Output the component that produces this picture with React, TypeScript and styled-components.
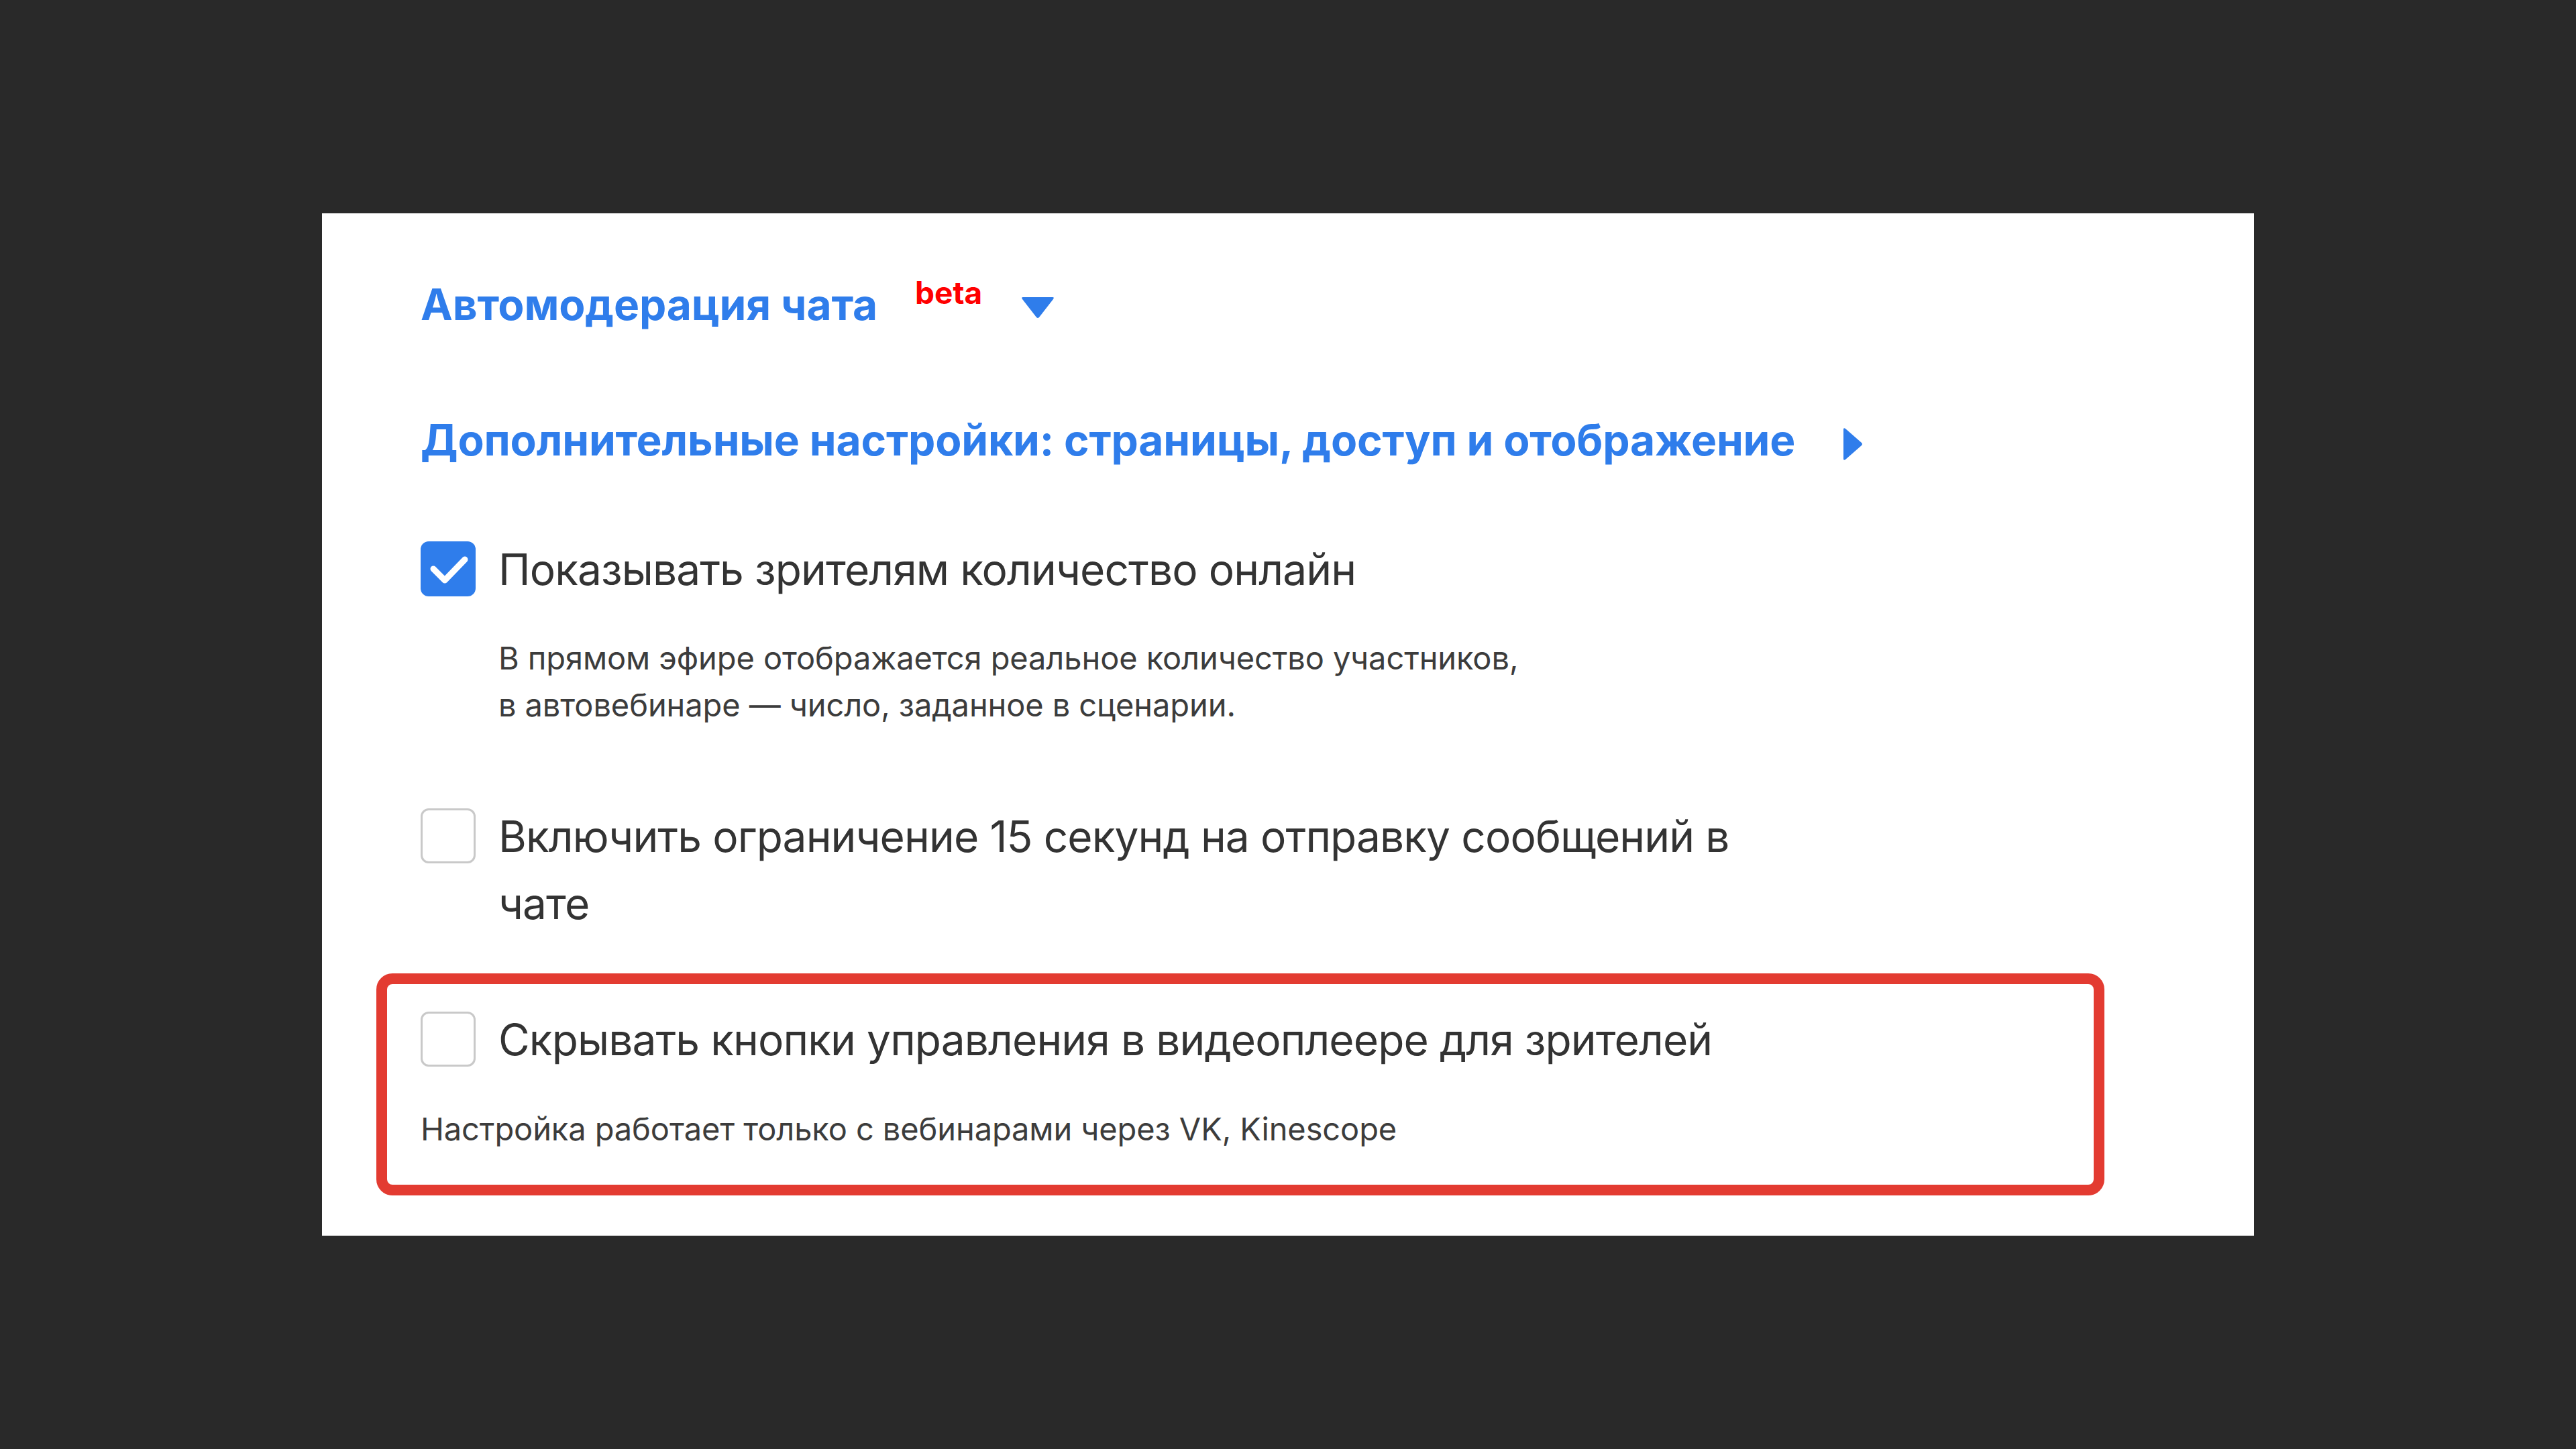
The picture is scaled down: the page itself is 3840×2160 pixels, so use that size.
import React from "react";
import styled, { createGlobalStyle } from "styled-components";

const Global = createGlobalStyle`
  html, body {
    margin: 0;
    padding: 0;
    background: #292929;
  }
  body {
    font-family: Inter, "Noto Sans", "Liberation Sans", sans-serif;
  }
`;

const Page = styled.div`
  box-sizing: border-box;
  width: 3840px;
  height: 2160px;
  padding: 318px 480px 0;
  background: #292929;
`;

const Panel = styled.section`
  box-sizing: border-box;
  width: 2880px;
  height: 1524px;
  background: #ffffff;
  padding: 97px 0 60px 147px;
  display: flex;
  flex-direction: column;
`;

const SectionTitle = styled.div<{ $gap?: number }>`
  margin-top: ${(p) => p.$gap ?? 0}px;
  font-size: 64px;
  line-height: 77px;
  font-weight: 700;
  color: #2f7deb;
  letter-spacing: -0.15px;
  white-space: nowrap;
`;

const Beta = styled.sup`
  margin-left: 56px;
  font-size: 46px;
  font-weight: 700;
  color: #ff0000;
  letter-spacing: 0;
  vertical-align: 24px;
  line-height: 0;
`;

const Caret = styled.svg<{ $gap: number; $shift: number }>`
  display: inline-block;
  margin-left: ${(p) => p.$gap}px;
  vertical-align: ${(p) => p.$shift}px;
`;

const Option = styled.div<{ $gap: number }>`
  margin-top: ${(p) => p.$gap}px;
  display: flex;
  align-items: flex-start;
  gap: 34px;
`;

const Box = styled.span<{ $on?: boolean }>`
  box-sizing: border-box;
  flex: none;
  width: 82px;
  height: 82px;
  margin-top: 8px;
  border-radius: 12px;
  background: ${(p) => (p.$on ? "#2f7deb" : "#ffffff")};
  border: ${(p) => (p.$on ? "none" : "3px solid #c9c9c9")};
  display: flex;
  align-items: center;
  justify-content: center;
`;

const OptionBody = styled.div`
  display: flex;
  flex-direction: column;
`;

const Label = styled.div`
  max-width: 1880px;
  font-size: 64px;
  line-height: 100px;
  font-weight: 400;
  color: #333333;
  letter-spacing: -0.9px;
`;

const Hint = styled.div<{ $gap: number }>`
  margin-top: ${(p) => p.$gap}px;
  font-size: 47px;
  line-height: 70px;
  font-weight: 400;
  color: #3c3c3c;
  letter-spacing: -0.1px;
`;

const Highlight = styled.div`
  box-sizing: border-box;
  width: 2576px;
  margin: 54px 0 0 -66px;
  border: 16px solid #e33b31;
  border-radius: 24px;
  padding: 33px 50px 48px;
`;

const Check = () => (
  <svg width="82" height="82" viewBox="0 0 82 82">
    <path
      d="M19 41 L36 58 L66 27"
      fill="none"
      stroke="#ffffff"
      strokeWidth="9"
      strokeLinecap="round"
      strokeLinejoin="round"
    />
  </svg>
);

export default function App() {
  return (
    <>
      <Global />
      <Page>
        <Panel>
          <SectionTitle>
            Автомодерация чата
            <Beta>beta</Beta>
            <Caret $gap={58} $shift={2} width="50" height="34" viewBox="0 0 50 34">
              <path d="M3 2 H47 Q50 2 48 5 L27 32 Q25 34 23 32 L2 5 Q0 2 3 2 Z" fill="#2f7deb" />
            </Caret>
          </SectionTitle>

          <SectionTitle $gap={125}>
            Дополнительные настройки: страницы, доступ и отображение
            <Caret $gap={70} $shift={-8} width="31" height="50" viewBox="0 0 31 50">
              <path d="M2 3 Q2 0 5 2 L29 23 Q31 25 29 27 L5 48 Q2 50 2 47 Z" fill="#2f7deb" />
            </Caret>
          </SectionTitle>

          <Option $gap={105}>
            <Box $on>
              <Check />
            </Box>
            <OptionBody>
              <Label>Показывать зрителям количество онлайн</Label>
              <Hint $gap={47}>
                В прямом эфире отображается реальное количество участников,
                <br />в автовебинаре — число, заданное в сценарии.
              </Hint>
            </OptionBody>
          </Option>

          <Option $gap={111}>
            <Box />
            <OptionBody>
              <Label>Включить ограничение 15 секунд на отправку сообщений в чате</Label>
            </OptionBody>
          </Option>

          <Highlight>
            <Option $gap={0}>
              <Box />
              <OptionBody>
                <Label>Скрывать кнопки управления в видеоплеере для зрителей</Label>
              </OptionBody>
            </Option>
            <Hint $gap={48}>Настройка работает только с вебинарами через VK, Kinescope</Hint>
          </Highlight>
        </Panel>
      </Page>
    </>
  );
}
